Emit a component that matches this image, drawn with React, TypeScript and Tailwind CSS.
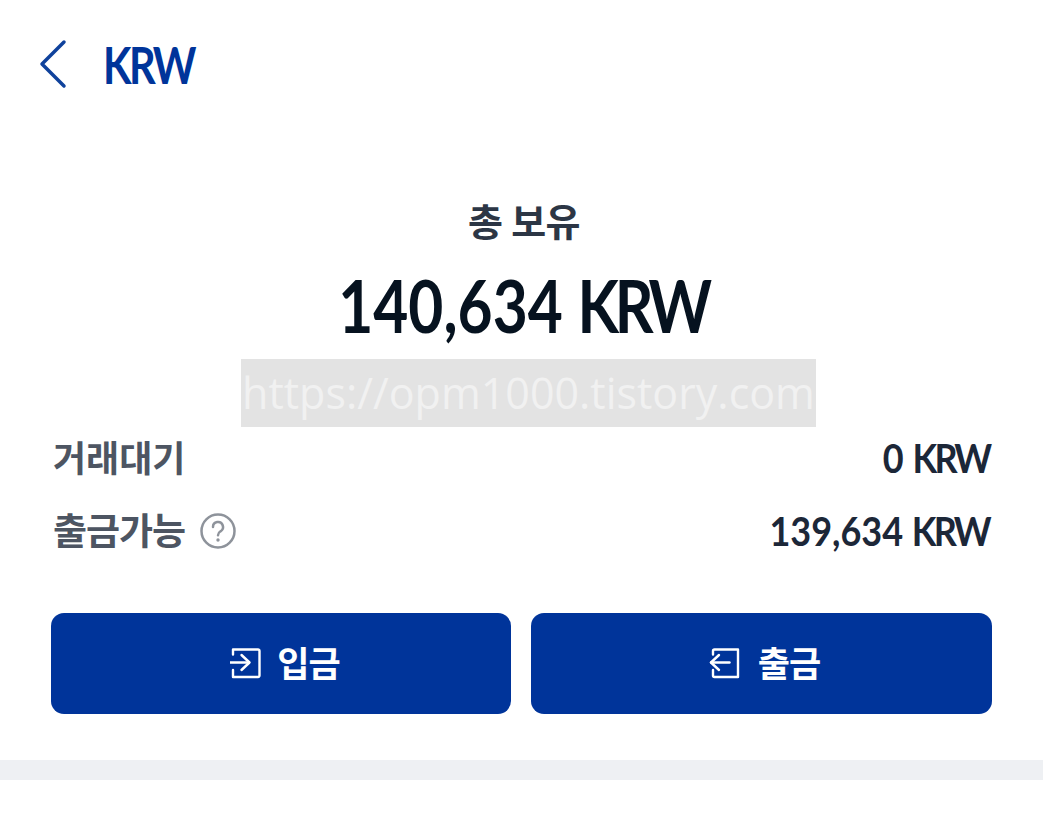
const FONT = "font-['Lato','Noto_Sans_CJK_KR',sans-serif]";

function EnterIcon() {
    return (
        <svg className="mb-[2px]" width="32" height="32" viewBox="0 0 32 32" fill="none" stroke="white" strokeWidth="2.400" strokeLinecap="round" strokeLinejoin="round">
            <path d="M3 7.500 V2.500 H28 a1.500 1.500 0 0 1 1.500 1.500 V28.500 a1.500 1.500 0 0 1 -1.500 1.500 H3 V23" />
            <path d="M0.500 15.500 H19" />
            <path d="M11.500 8 L19.500 15.500 L11.500 23" />
        </svg>
    );
}

function ExitIcon() {
    return (
        <svg className="mb-[2px]" width="32" height="32" viewBox="0 0 32 32" fill="none" stroke="white" strokeWidth="2.400" strokeLinecap="round" strokeLinejoin="round">
            <path d="M5 7.500 V4 a1.500 1.500 0 0 1 1.500 -1.500 H30 V30 H6.500 a1.500 1.500 0 0 1 -1.500 -1.500 V23" />
            <path d="M3 15.500 H21.500" />
            <path d="M11 8 L3 15.500 L11 23" />
        </svg>
    );
}

export default function App() {
    return (
        <div className={`flex h-[822px] w-[1043px] flex-col overflow-hidden bg-white ${FONT}`}>
            {/* Header */}
            <div className="flex h-[128px] items-center pb-[1px] pl-[38px]">
                <svg width="32" height="50" viewBox="0 0 32 50" fill="none" stroke="#0f429c" strokeWidth="3.500" strokeLinecap="round" strokeLinejoin="round">
                    <path d="M26 3 L4 25 L26 47" />
                </svg>
                <span className="ml-[33px] origin-left scale-x-[0.8] text-[52px] font-bold leading-none tracking-[-3px] text-[#00349a]">KRW</span>
            </div>

            {/* Balance */}
            <div className="flex flex-col items-center">
                <p className="ml-[5px] mt-[65px] text-[38px] font-bold leading-[56px] tracking-[-0.5px] text-[#2c3645]">총 보유</p>
                <p className="ml-[4px] mt-[14px] scale-x-[0.84] whitespace-nowrap text-[72px] font-bold leading-[84px] text-[#06121f]">
                    140,634 <span className="tracking-[-5px]">KRW</span>
                </p>
                <div className="ml-[14px] mt-[12px] flex h-[68px] w-[575px] items-center justify-center overflow-hidden bg-[#e3e3e3] font-['Open_Sans',sans-serif] text-[43px] text-[#f1f1f1]">
                    https://opm1000.tistory.com
                </div>
            </div>

            {/* Rows */}
            <div className="mt-[6px] flex flex-col pl-[53px] pr-[54px]">
                <div className="flex h-[50px] items-center justify-between">
                    <span className="text-[36px] font-bold text-[#4d5562]">거래대기</span>
                    <span className="origin-right scale-x-[0.9] text-[40px] font-bold text-[#1c2738]">
                        0 <span className="tracking-[-3px]">KRW</span>
                    </span>
                </div>
                <div className="mt-[23px] flex h-[50px] items-center justify-between">
                    <span className="flex items-center gap-[15px]">
                        <span className="text-[37px] font-bold tracking-[-1px] text-[#4d5562]">출금가능</span>
                        <svg width="36" height="36" viewBox="0 0 36 36" fill="none">
                            <circle cx="18" cy="18" r="16.500" stroke="#8e939b" strokeWidth="2.500" />
                            <path d="M13 14 a5 5 0 1 1 7.500 4.300 c-1.600 1 -2.500 2 -2.500 4" stroke="#8e939b" strokeWidth="2.500" strokeLinecap="round" />
                            <circle cx="18" cy="27" r="1.700" fill="#8e939b" />
                        </svg>
                    </span>
                    <span className="origin-right scale-x-[0.9] text-[40px] font-bold text-[#1c2738]">
                        139,634 <span className="tracking-[-3px]">KRW</span>
                    </span>
                </div>
            </div>

            {/* Buttons */}
            <div className="mt-[57px] grid grid-cols-[460px_461px] gap-[20px] px-[51px]">
                <button className="flex h-[101px] items-center justify-center gap-[15px] rounded-[13px] bg-[#00349a] pl-[8px] text-[35px] font-bold tracking-[-1px] text-white">
                    <EnterIcon />
                    입금
                </button>
                <button className="flex h-[101px] items-center justify-center gap-[18px] rounded-[13px] bg-[#00349a] pl-[5px] text-[35px] font-bold tracking-[-1px] text-white">
                    <ExitIcon />
                    출금
                </button>
            </div>

            <div className="mt-[46px] h-[20px] bg-[#eef0f3]" />
        </div>
    );
}
